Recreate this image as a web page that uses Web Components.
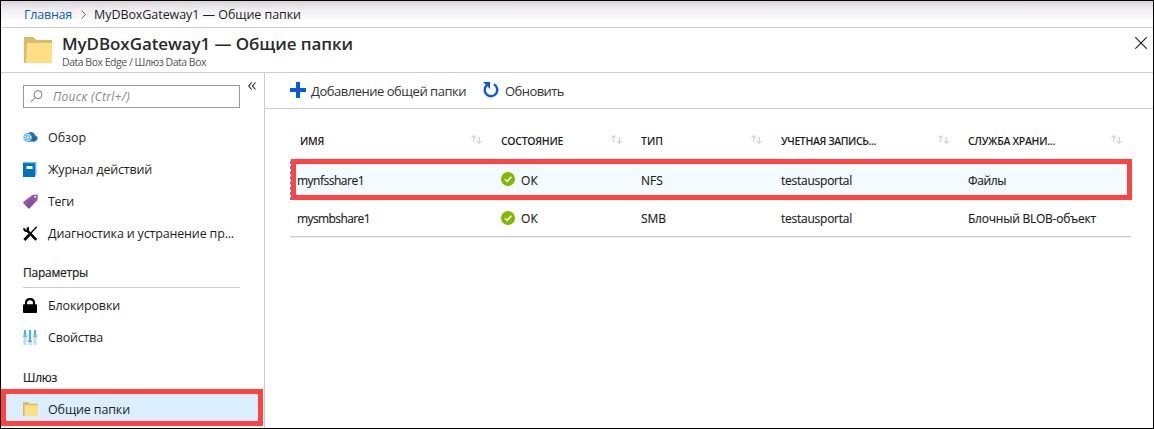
<!DOCTYPE html>
<html lang="ru">
<head>
<meta charset="utf-8">
<title>MyDBoxGateway1 — Общие папки</title>
<style>
html,body{margin:0;height:100%;background:#fff;overflow:hidden}
</style>
</head>
<body>
<portal-app></portal-app>
<script>
const ICONS = {
  folder: '<svg viewBox="0 0 28 26"><path fill="#d0b36a" d="M0 0h9l3 3h16v23H0z"/><path fill="#ffdf86" d="M2.500 6H28v19q0 1-1 1H2z"/><path fill="#d9bb70" d="M0 0h9l3 3h15.500v3H3L2 26H1q-1 0-1-1z"/></svg>',
  folderSmall: '<svg viewBox="0 0 15 15"><path fill="#ffdf86" d="M1 3h14v10.500q0 .5-.5.500H1z"/><path fill="#d6b96f" d="M0 0h5l1.500 1.700H14.500V3.300H1.500V14H.5Q0 14 0 13.500z"/></svg>',
  search: '<svg viewBox="0 0 13 13" fill="none" stroke="#777" stroke-width="1"><circle cx="8" cy="4.600" r="4"/><path d="M5.200 7.500L.5 12.200"/></svg>',
  cloud: '<svg viewBox="0 0 15 15"><path fill="#2373bd" d="M5 3q3-2 6 .3q1 .7 1 2q2.800 1.200 2.800 3T12 11.500H5z"/><path fill="#16548c" d="M8 5l4 2v4.500H8z" opacity=".4"/><circle cx="4.800" cy="7.500" r="4.400" fill="#54a9dc"/><circle cx="4.800" cy="7.500" r="2.900" fill="none" stroke="#e8f6fc" stroke-width="1.300" stroke-dasharray="1.500 .8"/><circle cx="4.800" cy="7.500" r="1.200" fill="#e8f6fc"/></svg>',
  book: '<svg viewBox="0 0 14 15"><path fill="#7ab8e3" d="M1 0h12.500v13.500H1z"/><path fill="#0072c6" d="M0 1.200Q0 .2 1 .2l.5 1H12V15H0z"/><path fill="#fff" d="M3.500 4h6v3h-6z"/></svg>',
  tag: '<svg viewBox="0 0 15 15"><path fill="#9157a5" d="M9.500 1l4-.6q1.300 0 1.300 1.200L14.500 6 7 14q-1 1-2 0L.5 9.300q-.8-.8.100-1.500z"/><path fill="#783b91" d="M9 5l2 3-5 6.400-1-.4L2.500 11z" opacity=".35"/><circle cx="12.300" cy="2.800" r="1" fill="#fff"/></svg>',
  tools: '<svg viewBox="0 0 15 15" fill="none" stroke="#000"><path stroke-width="2.600" d="M4.500 4.800L13.300 13.800"/><path stroke-width="2.300" d="M1.200 2.200Q1.300 5 3.600 4.900Q5.800 4.300 4.600 1.300"/><path stroke-width="1.300" d="M13.700.8L7 8"/><path stroke-width="2.800" d="M6.500 8.700L1.300 14"/></svg>',
  lock: '<svg viewBox="0 0 14 15"><path d="M3 7V5Q3 1.200 7 1.200T11 5v2" fill="none" stroke="#000" stroke-width="2.200"/><rect y="6.300" width="14" height="8.700" rx="1" fill="#000"/></svg>',
  sliders: '<svg viewBox="0 0 14 15"><path fill="#b3e1f2" d="M.5 1h3v14h-3zM5.500 1h3v14h-3zM10.500 1h3v14h-3z"/><path fill="#4fb4dc" d="M1 0h2v5H1zM6 0h2v11H6zM11 0h2v5h-2z"/><path fill="#8d9aa0" d="M0 5.500h4v1.200H0zM5 10.800h4V12H5zM10 5.500h4v1.200h-4z"/></svg>',
  plus: '<svg viewBox="0 0 16 16"><path fill="#0a5bd9" d="M6 0h4v6h6v4h-6v6H6v-6H0V6h6z"/></svg>',
  refresh: '<svg viewBox="0 0 16 16"><path fill="none" stroke="#0a5bd9" stroke-width="2.400" d="M10.800 2.300A6.300 6.300 0 1 1 3.600 3.400"/><path fill="#0a5bd9" d="M0 0h7v7L4.700 4.800 2.500 2.600Z"/></svg>',
  check: '<svg viewBox="0 0 14 14"><circle cx="7" cy="7" r="7" fill="#7fba00"/><path d="M3.800 7l2.400 2.400 4.200-4.700" fill="none" stroke="#fff" stroke-width="1.600"/></svg>',
  sort: '<svg viewBox="0 0 11 9" fill="none" stroke="#c8c8c8"><path d="M2.700 7V.700M.3 3l2.400-2.400L5.100 3M8.300 2v6.400M5.900 6l2.400 2.400L10.700 6"/></svg>',
  close: '<svg viewBox="0 0 12 12"><path d="M.3.3l11.400 11.400M11.700.3L.3 11.700" stroke="#222" stroke-width="1.150"/></svg>',
  chevron: '<svg viewBox="0 0 5 9"><path d="M.5.5l4 4-4 4" fill="none" stroke="#666"/></svg>',
  collapse: '<svg viewBox="0 0 8 8"><path d="M3.700.5L.7 4l3 3.500M7.500.5l-3 3.500 3 3.500" fill="none" stroke="#222" stroke-width="1.100"/></svg>'
};

class PortalElement extends HTMLElement {
  constructor(){ super(); this.attachShadow({mode:'open'}); }
  connectedCallback(){ this.shadowRoot.innerHTML = this.render(); }
  attr(n, d=''){ return this.getAttribute(n) ?? d; }
}

customElements.define('ui-icon', class extends PortalElement {
  render(){
    return `<style>:host{display:block;flex:none;width:${this.attr('w')}px;height:${this.attr('h')}px}svg{display:block;width:100%;height:100%}</style>${ICONS[this.attr('name')]}`;
  }
});

/* A single-line label; "fit" is the label's width, reached by even tracking. */
customElements.define('ui-text', class extends PortalElement {
  render(){
    return `<style>:host{display:block;flex:none;white-space:nowrap;width:${this.attr('fit')}px}span{display:inline-block}</style><span><slot></slot></span>`;
  }
  connectedCallback(){
    super.connectedCallback();
    const span = this.shadowRoot.querySelector('span');
    const n = this.textContent.length;
    span.style.letterSpacing = (+this.attr('fit') - span.getBoundingClientRect().width) / n + 'px';
  }
});

customElements.define('bread-crumb', class extends PortalElement {
  render(){
    return `<style>
      :host{display:flex;align-items:center;box-sizing:border-box;height:27px;padding:0 0 0 23px;border-bottom:1px solid #ccc;background:linear-gradient(#d9d4da,#efedf0 8px,#fff 21px);font-size:12.500px;line-height:26px}
      .home{color:#0a5bd9}ui-icon{margin:0 8px 0 9px}
      ui-text{padding-top:1px}
    </style><ui-text class="home" fit="48">Главная</ui-text><ui-icon name="chevron" w="5" h="9"></ui-icon><ui-text fit="207">MyDBoxGateway1 — Общие папки</ui-text>`;
  }
});

customElements.define('blade-header', class extends PortalElement {
  render(){
    return `<style>
      :host{display:flex;align-items:flex-start;box-sizing:border-box;height:45px;padding:9px 6px 0 23px;border-bottom:1px solid #ccc}
      .titles{margin:-5px auto 0 10px}
      .title{font-size:17px;font-weight:600;line-height:23px;color:#2b2b2b}
      .sub{font-size:10.500px;line-height:13px;margin-top:1px;color:#555}
    </style><ui-icon name="folder" w="28" h="26"></ui-icon>
    <div class="titles"><ui-text class="title" fit="291">MyDBoxGateway1 — Общие папки</ui-text><ui-text class="sub" fit="144">Data Box Edge / Шлюз Data Box</ui-text></div>
    <ui-icon name="close" w="12" h="12"></ui-icon>`;
  }
});

customElements.define('search-box', class extends PortalElement {
  render(){
    return `<style>
      :host{display:flex;align-items:flex-start;height:23px;padding:12px 0 0 22px}
      .box{display:flex;align-items:center;box-sizing:border-box;width:217px;height:23px;border:1px solid #999;padding-left:6px;font:italic 12px/20px "Open Sans","Noto Sans",sans-serif;color:#888}
      .box ui-icon{margin-right:10px}
      .c{margin:-3px 0 0 8px}
    </style><div class="box"><ui-icon name="search" w="13" h="13"></ui-icon><ui-text fit="77">Поиск (Ctrl+/)</ui-text></div><ui-icon class="c" name="collapse" w="8" h="8"></ui-icon>`;
  }
});

customElements.define('menu-item', class extends PortalElement {
  render(){
    return `<style>
      :host{display:flex;align-items:center;height:32px;padding-left:22px;font-size:12.500px;line-height:20px}
      :host([selected]){box-sizing:border-box;width:262px;height:37px;border:5px solid #ff4343;padding-left:17px;background:#dbeefe}
      .i{display:flex;justify-content:flex-start;width:15px;margin:-2px 10px 0 0}
      :host([selected]) .i{margin-top:3px}
      :host([selected]) ui-text{padding-top:5px}
    </style><div class="i"><ui-icon name="${this.attr('icon')}" w="${this.attr('iw','15')}" h="15"></ui-icon></div><ui-text fit="${this.attr('fit')}">${this.attr('label')}</ui-text>`;
  }
});

customElements.define('menu-heading', class extends PortalElement {
  render(){
    return `<style>
      :host{display:block;width:217px;font-size:12px;line-height:20px;-webkit-text-stroke:.2px #1e1e1e}
      :host([rule]){border-bottom:1px solid #ccc;padding-bottom:4px}
    </style><ui-text fit="${this.attr('fit')}">${this.attr('label')}</ui-text>`;
  }
});

customElements.define('side-menu', class extends PortalElement {
  render(){
    return `<style>
      :host{display:block;box-sizing:border-box;width:264px;border-right:1px solid #ccc}
      nav{padding-top:14px}
      .p{margin:13px 0 0 22px}.s{margin:14px 0 1px 22px}
      .p + menu-item{margin-top:2px}
    </style><search-box></search-box><nav>
      <menu-item icon="cloud" fit="38" label="Обзор"></menu-item>
      <menu-item icon="book" iw="14" fit="104" label="Журнал действий"></menu-item>
      <menu-item icon="tag" fit="26" label="Теги"></menu-item>
      <menu-item icon="tools" fit="186" label="Диагностика и устранение пр..."></menu-item>
      <menu-heading class="p" rule fit="65" label="Параметры"></menu-heading>
      <menu-item icon="lock" iw="14" fit="72" label="Блокировки"></menu-item>
      <menu-item icon="sliders" iw="14" fit="55" label="Свойства"></menu-item>
      <menu-heading class="s" fit="34" label="Шлюз"></menu-heading>
      <menu-item selected icon="folderSmall" fit="82" label="Общие папки"></menu-item>
    </nav>`;
  }
});

customElements.define('command-bar', class extends PortalElement {
  render(){
    return `<style>
      :host{display:flex;align-items:center;box-sizing:border-box;height:36px;padding-left:25px;border-bottom:1px solid #ccc;font-size:13px;line-height:20px;color:#333}
      ui-text{margin:1px 17px 0 5px}
      ui-text:last-child{margin-left:6px}
      ui-icon{margin-top:-2px}
    </style><ui-icon name="plus" w="16" h="16"></ui-icon><ui-text fit="155">Добавление общей папки</ui-text><ui-icon name="refresh" w="16" h="16"></ui-icon><ui-text fit="59">Обновить</ui-text>`;
  }
});

customElements.define('column-head', class extends PortalElement {
  render(){
    return `<style>
      :host{display:flex;justify-content:space-between;align-items:center;font-size:10.500px;font-weight:600;line-height:18px}
      ui-icon{margin:-4px 19px 0 0}
    </style><ui-text fit="${this.attr('fit')}">${this.attr('label')}</ui-text><ui-icon name="sort" w="11" h="9"></ui-icon>`;
  }
});

customElements.define('share-row', class extends PortalElement {
  render(){
    const [name,nw,type,tw,svc,sw] = this.attr('data').split('|');
    return `<style>
      :host{display:grid;grid-template-columns:204px 140px 140px 187px 1fr;align-items:center;box-sizing:border-box;height:36px;margin-left:25px;width:841px;padding-left:7px;font-size:12px;line-height:20px;-webkit-text-stroke:.15px #1e1e1e}
      :host([selected]){height:41px;border:5px solid #ff4343;background:#f3fbfe;margin-left:26px;width:841px;padding-left:1px}
      :host([selected])::before{content:"";position:absolute;left:290px;top:161px;height:39px;border-left:1px dashed #1ba1d6}
      :host([selected]) > ui-text,:host([selected]) .st ui-text{padding-top:2px}
      .st{display:flex;align-items:center;gap:6px}
      .st ui-icon{margin-top:-1px}
      ui-text{padding-top:1px}
    </style><ui-text fit="${nw}">${name}</ui-text><div class="st"><ui-icon name="check" w="14" h="14"></ui-icon><ui-text fit="17">ОК</ui-text></div><ui-text fit="${tw}">${type}</ui-text><ui-text fit="71">testausportal</ui-text><ui-text fit="${sw}">${svc}</ui-text>`;
  }
});

customElements.define('share-table', class extends PortalElement {
  render(){
    return `<style>
      :host{display:block}
      .head{display:grid;grid-template-columns:201px 140px 140px 187px 173px;height:36px;padding:14px 0 0 35px}
      .end{height:1px;margin-left:25px;width:841px;background:#ccc;border-bottom:1px solid #eee}
    </style><div class="head">
      <column-head fit="24" label="ИМЯ"></column-head><column-head fit="62" label="СОСТОЯНИЕ"></column-head><column-head fit="22" label="ТИП"></column-head><column-head fit="95" label="УЧЕТНАЯ ЗАПИСЬ..."></column-head><column-head fit="87" label="СЛУЖБА ХРАНИ..."></column-head>
    </div>
    <share-row selected data="mynfsshare1|67|NFS|22|Файлы|38"></share-row>
    <share-row data="mysmbshare1|73|SMB|25|Блочный BLOB-объект|128"></share-row>
    <div class="end"></div>`;
  }
});

customElements.define('portal-app', class extends PortalElement {
  render(){
    return `<style>
      :host{display:flex;flex-direction:column;box-sizing:border-box;width:1154px;height:429px;border:1px solid #000;background:#fff;font-family:"Open Sans","Noto Sans",sans-serif;color:#1e1e1e;overflow:hidden}
      .body{display:flex;flex:1;min-height:0}
      main{flex:1}
    </style><bread-crumb></bread-crumb><blade-header></blade-header><div class="body"><side-menu></side-menu><main><command-bar></command-bar><share-table></share-table></main></div>`;
  }
});
</script>
</body>
</html>
